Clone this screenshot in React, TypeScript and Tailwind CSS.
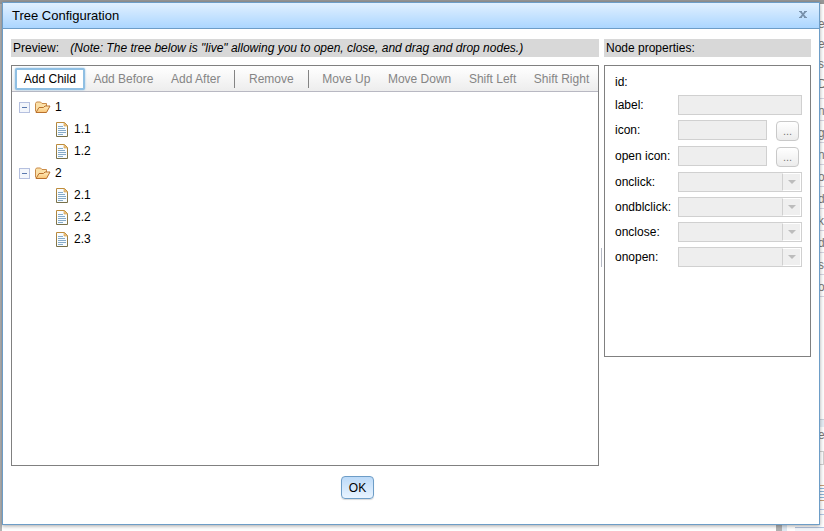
import { useState } from "react";

type TreeNode = { label: string; children: string[] };

const tree: TreeNode[] = [
  { label: "1", children: ["1.1", "1.2"] },
  { label: "2", children: ["2.1", "2.2", "2.3"] },
];

function FolderIcon() {
  return (
    <svg width="16" height="12" viewBox="0 0 16 12" aria-hidden="true">
      <defs>
        <linearGradient id="folder" x1="0" y1="0" x2="0" y2="1">
          <stop offset="0" stopColor="#ffeec0" />
          <stop offset="1" stopColor="#f9c474" />
        </linearGradient>
      </defs>
      <path d="M.5 10.5V2.500L1.500 1h4L7 2.500h4.500V6" fill="#fbe0a8" stroke="#c98a48" />
      <path d="M1 11.500 4 6.500h4.500L10 5h5L11.500 11.500Z" fill="url(#folder)" stroke="#b9702c" strokeLinejoin="round" />
    </svg>
  );
}

function DocumentIcon() {
  return (
    <svg width="12" height="15" viewBox="0 0 12 15" aria-hidden="true">
      <defs>
        <linearGradient id="docEdge" x1="0" y1="0" x2="0" y2="1">
          <stop offset="0" stopColor="#bd8c3c" />
          <stop offset="1" stopColor="#77704a" />
        </linearGradient>
      </defs>
      <path d="M.5.5h8l3 3v11H.5Z" fill="#f8fcff" stroke="url(#docEdge)" />
      <path d="M8 .5 8 4h3.500Z" fill="#f0c884" stroke="#d29a48" strokeWidth=".6" />
      <path d="M2 4.500h5M2 6.500h7M2 8.500h8M2 10.500h8M2 12.500h5" stroke="#86abc9" />
    </svg>
  );
}

function ToolButton({ label, active }: { label: string; active?: boolean }) {
  return active ? (
    <button
      type="button"
      className="h-[22px] grow rounded-xs border-2 border-[#8fbfe3] bg-white px-1.5 whitespace-nowrap text-black shadow-[0_0_2px_#8fbfe3]"
    >
      {label}
    </button>
  ) : (
    <button type="button" disabled className="h-[22px] grow px-2 whitespace-nowrap text-[#858585]">
      {label}
    </button>
  );
}

function Separator() {
  return <div className="mx-[5px] h-[18px] w-px shrink-0 bg-[#848484]" />;
}

function Branch({ node }: { node: TreeNode }) {
  const [open, setOpen] = useState(true);
  return (
    <li>
      <div className="flex h-[22px] items-center">
        <button
          type="button"
          aria-label={open ? "Collapse" : "Expand"}
          aria-expanded={open}
          onClick={() => setOpen(!open)}
          className="mr-[5px] flex size-[11px] items-center justify-center border border-[#b5c0df] bg-[#f3f6fb]"
        >
          <svg width="5" height="5" viewBox="0 0 5 5" aria-hidden="true">
            <path d={open ? "M0 2.500h5" : "M0 2.500h5M2.500 0v5"} stroke="#5a78ad" />
          </svg>
        </button>
        <FolderIcon />
        <span className="ml-1">{node.label}</span>
      </div>
      {open && (
        <ul className="pl-[37px]">
          {node.children.map((child) => (
            <li key={child} className="flex h-[22px] items-center gap-1.5">
              <DocumentIcon />
              {child}
            </li>
          ))}
        </ul>
      )}
    </li>
  );
}

function TextRow({ name, browse }: { name: string; browse?: boolean }) {
  return (
    <div className="flex items-start">
      <label htmlFor={name} className="w-[63px] shrink-0 leading-5 whitespace-nowrap">
        {name}:
      </label>
      <input id={name} type="text" disabled className="h-5 min-w-0 flex-1 border border-[#d0d0d0] bg-[#eeeeee] px-1" />
      {browse && (
        <button
          type="button"
          disabled
          aria-label={`Browse ${name}`}
          className="mt-px mr-[3px] ml-[9px] h-5 w-[23px] rounded border border-[#c9c9c9] bg-linear-to-b from-white to-[#ececec] text-[11px] leading-4 text-[#777]"
        >
          ...
        </button>
      )}
    </div>
  );
}

function SelectRow({ name }: { name: string }) {
  return (
    <div className="flex items-start">
      <label htmlFor={name} className="w-[63px] shrink-0 leading-5 whitespace-nowrap">
        {name}:
      </label>
      <div className="relative flex min-w-0 flex-1">
        <select id={name} disabled className="h-5 w-full appearance-none border border-[#d0d0d0] bg-[#eeeeee] opacity-100">
          <option></option>
        </select>
        <span className="pointer-events-none absolute inset-y-px right-px flex w-[19px] items-center justify-center border border-white border-l-[#d0d0d0] bg-[#efefef]">
          <svg width="8" height="4" viewBox="0 0 8 4" aria-hidden="true">
            <path d="M0 0h8L4 4Z" fill="#bcbcbc" />
          </svg>
        </span>
      </div>
    </div>
  );
}

function PageBehind() {
  return (
    <div className="flex h-full justify-between overflow-hidden border-t-4 border-[#989898] text-xs text-[#777]" aria-hidden="true">
      <div className="w-[2px] bg-[#b4b4b4]" />
      <div className="flex w-[6px] flex-col overflow-hidden">
        <div className="flex h-[95px] flex-col border-b border-[#d5d5e2] pt-[10px] leading-5">
          {["e", "e", "s", "D"].map((text, i) => (
            <span key={i}>{text}</span>
          ))}
        </div>
        {["n", "g", "n", "o", "d", "k", "d", "s", "o"].map((text, i) => (
          <span key={i} className="h-[22px] shrink-0 border-b border-[#d5d5e2] leading-6">
            {text}
          </span>
        ))}
        <div className="mt-[122px] h-2 shrink-0 border-t border-[#c9d3dc] bg-[#e6eef6]" />
        <span className="leading-4">e</span>
        <div className="mt-2 h-3.5 shrink-0 border border-[#d0d0d0]" />
        <div className="mt-5 flex h-4 shrink-0 flex-col justify-between border-y border-[#c99e77] py-0.5">
          <div className="h-px bg-[#8db4d8]" />
          <div className="h-px bg-[#8db4d8]" />
          <div className="h-px bg-[#8db4d8]" />
          <div className="h-px bg-[#8db4d8]" />
        </div>
        <div className="mt-2 h-1.5 shrink-0 border-y border-[#b3c8e6]" />
      </div>
    </div>
  );
}

export default function App() {
  return (
    <div className="relative h-screen overflow-hidden bg-white font-['Liberation_Sans',Arial,sans-serif] text-xs text-black">
      <PageBehind />
      <div className="absolute right-0 bottom-0 flex h-2 w-12 items-end" aria-hidden="true">
        <div className="h-full w-1.5 bg-[#b0b0b0]" />
        <div className="h-full w-[5px] bg-[#dfe9f3]" />
        <div className="ml-2 h-1 grow border-t border-[#b3c4de] bg-[#f3f6fb]" />
      </div>
      <section
        role="dialog"
        aria-labelledby="title"
        className="absolute top-[2px] right-1 bottom-1.5 left-[2px] flex flex-col border border-[#6d9dc7] bg-white shadow-[0_1px_4px_rgba(0,0,0,0.35)]"
      >
        <header className="flex h-[26px] shrink-0 items-center justify-between border-b border-[#6d9dc7] bg-linear-to-b from-[#e1f0ff] to-[#abd6ff] pr-3 pl-[9px]">
          <h1 id="title" className="text-[13px]">Tree Configuration</h1>
          <button type="button" aria-label="Close" className="pb-0.5">
            <svg width="8" height="7" viewBox="0 0 8 7" aria-hidden="true">
              <path d="M1.500.5l5 6M6.500.5l-5 6" stroke="#7790aa" strokeWidth="1.800" />
              <path d="M0 .5h3M5 .5h3M0 6.500h3M5 6.500h3" stroke="#7790aa" />
            </svg>
          </button>
        </header>

        <div className="flex min-h-0 flex-1 pt-2.5 pr-2 pl-2">
          <div className="flex min-w-0 flex-1 flex-col pb-2.5">
            <h2 className="h-[18px] shrink-0 bg-[#d8d8d8] pl-0.5 leading-[18px] whitespace-nowrap">
              Preview: <em className="ml-2">(Note: The tree below is "live" allowing you to open, close, and drag and drop nodes.)</em>
            </h2>
            <div className="mt-2 min-h-0 flex-1 border border-[#808080]">
              <div
                role="toolbar"
                aria-label="Tree actions"
                className="flex h-[26px] items-center border-b border-[#b8b8c2] bg-linear-to-b from-white to-[#ededed] pl-[3px]"
              >
                <ToolButton label="Add Child" active />
                <ToolButton label="Add Before" />
                <ToolButton label="Add After" />
                <Separator />
                <ToolButton label="Remove" />
                <Separator />
                <ToolButton label="Move Up" />
                <ToolButton label="Move Down" />
                <ToolButton label="Shift Left" />
                <ToolButton label="Shift Right" />
              </div>
              <ul className="pt-1 pl-[7px]">
                {tree.map((node) => (
                  <Branch key={node.label} node={node} />
                ))}
              </ul>
            </div>
          </div>

          <div className="flex w-[5px] shrink-0 items-center justify-center">
            <div className="h-[19px] w-px bg-[#b5b9c4]" />
          </div>

          <div className="w-[207px] shrink-0">
            <h2 className="h-[18px] bg-[#d8d8d8] pl-0.5 leading-[18px]">Node properties:</h2>
            <form className="mt-2 flex min-h-[292px] flex-col gap-[5px] border border-[#808080] pt-[9px] pr-2 pl-2.5">
              <div className="h-[15px] leading-[15px]">id:</div>
              <TextRow name="label" />
              <TextRow name="icon" browse />
              <TextRow name="open icon" browse />
              <SelectRow name="onclick" />
              <SelectRow name="ondblclick" />
              <SelectRow name="onclose" />
              <SelectRow name="onopen" />
            </form>
          </div>
        </div>

        <footer className="flex shrink-0 justify-center pr-[107px] pb-[25px]">
          <button
            type="button"
            className="h-[23px] rounded border border-[#6d9dc7] bg-linear-to-b from-[#bcdaf8] to-[#e9f4ff] px-[7px] leading-5 shadow-[0_1px_1px_rgba(0,0,0,0.15)]"
          >
            OK
          </button>
        </footer>
      </section>
    </div>
  );
}
